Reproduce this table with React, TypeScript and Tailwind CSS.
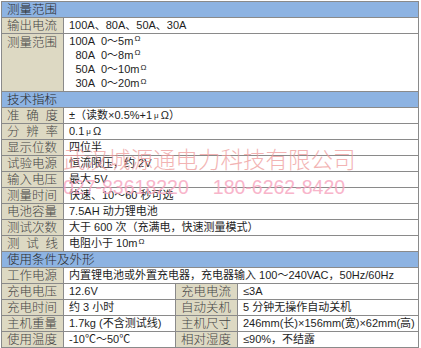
import React from 'react';

const font = { fontFamily: '"Liberation Sans", "Noto Sans CJK SC", sans-serif' };
const cjk = { fontFamily: '"Noto Sans CJK SC", sans-serif' };

const Header: React.FC<{ title: string }> = ({ title }) => (
    <div
        className="h-4 flex items-center bg-[#8db3e2] border-b border-[#8a8a8a] pl-[5px] text-[12.5px] font-light text-[#2a2a2a] leading-none"
        style={cjk}
    >
        {title}
    </div>
);

const Label: React.FC<{ text: string; spread?: boolean; top?: boolean }> = ({ text, spread, top }) => (
    <div
        className={`w-[62px] shrink-0 bg-[#ddd9c3] border-r border-[#8a8a8a] flex pl-[5px] text-[12.5px] font-light text-[#454545] leading-none ${top ? 'items-start pt-[2px]' : 'items-center'}`}
        style={cjk}
    >
        {spread ? (
            <span className="flex justify-between w-[51px]">
                {text.split('').map((c, i) => (
                    <span key={i}>{c}</span>
                ))}
            </span>
        ) : (
            text
        )}
    </div>
);

const Row: React.FC<{ label: string; spread?: boolean; children: React.ReactNode }> = ({ label, spread, children }) => (
    <div className="h-4 flex border-b border-[#8a8a8a]">
        <Label text={label} spread={spread} />
        <div className="flex-1 flex items-center pl-[5px] text-[11px] text-[#1e1e1e] leading-none whitespace-nowrap">{children}</div>
    </div>
);

const Row4: React.FC<{ l1: string; v1: React.ReactNode; l2: string; v2: React.ReactNode }> = ({ l1, v1, l2, v2 }) => (
    <div className="h-4 flex border-b border-[#8a8a8a]">
        <Label text={l1} />
        <div className="w-[112px] shrink-0 border-r border-[#8a8a8a] flex items-center pl-[5px] text-[11px] text-[#1e1e1e] leading-none whitespace-nowrap">{v1}</div>
        <Label text={l2} />
        <div className="flex-1 flex items-center pl-[5px] text-[11px] text-[#1e1e1e] leading-none whitespace-nowrap">{v2}</div>
    </div>
);

const Ohm = () => <span className="text-[8px] relative -top-[2px] ml-px">Ω</span>;
const Mu = () => <span className="text-[8px] mx-[2px]">μ</span>;

const ranges = [
    ['100A', '0～5m'],
    ['80A', '0～8m'],
    ['50A', '0～10m'],
    ['30A', '0～20m'],
];

const App: React.FC = () => {
    return (
        <div className="bg-white w-[421px] h-[348px] overflow-hidden pt-px pl-px relative" style={font}>
            <div className="w-[418px] border-t border-l border-r border-[#8a8a8a]">
                {/* 测量范围 */}
                <Header title="测量范围" />
                <Row label="输出电流">100A、80A、50A、30A</Row>
                <div className="h-[58px] flex border-b border-[#8a8a8a]">
                    <Label text="测量范围" top />
                    <div className="flex-1 flex flex-col pl-[5px] text-[11px] text-[#1e1e1e] leading-none">
                        {ranges.map(([a, r]) => (
                            <div key={a} className="h-[14.5px] flex items-center">
                                <span className="w-[26px] text-right">{a}</span>
                                <span className="ml-[6px]">{r}</span>
                                <Ohm />
                            </div>
                        ))}
                    </div>
                </div>

                {/* 技术指标 */}
                <Header title="技术指标" />
                <Row label="准确度" spread>
                    ±（读数×0.5%+1<Mu />Ω）
                </Row>
                <Row label="分辨率" spread>
                    0.1<Mu />Ω
                </Row>
                <Row label="显示位数">四位半</Row>
                <Row label="试验电源">恒流限压，约 2V</Row>
                <Row label="输入电压">最大 5V</Row>
                <Row label="测量时间">快速、10～60 秒可选</Row>
                <Row label="电池容量">7.5AH 动力锂电池</Row>
                <Row label="测试次数">大于 600 次（充满电，快速测量模式）</Row>
                <Row label="测试线" spread>
                    电阻小于 10m<Ohm />
                </Row>

                {/* 使用条件及外形 */}
                <Header title="使用条件及外形" />
                <Row label="工作电源">内置锂电池或外置充电器，充电器输入 100～240VAC，50Hz/60Hz</Row>
                <Row4 l1="充电电压" v1="12.6V" l2="充电电流" v2="≤3A" />
                <Row4 l1="充电时间" v1="约 3 小时" l2="自动关机" v2="5 分钟无操作自动关机" />
                <Row4 l1="主机重量" v1="1.7kg (不含测试线)" l2="主机尺寸" v2="246mm(长)×156mm(宽)×62mm(高)" />
                <Row4 l1="使用温度" v1="-10℃～50℃" l2="相对湿度" v2="≤90%，不结露" />
            </div>

            {/* watermark */}
            <div className="absolute left-[63px] top-[147px] pointer-events-none select-none">
                <div className="text-[22.5px] leading-none font-light text-[#ee9a9a] opacity-75 whitespace-nowrap" style={cjk}>
                    武汉城源通电力科技有限公司
                </div>
                <div className="mt-[8px] flex text-[19.5px] leading-none text-[#f7a3be] opacity-80 whitespace-nowrap">
                    <span>027-83618220</span>
                    <span className="ml-[24px]">180-6262-8420</span>
                </div>
            </div>
        </div>
    );
};

export default App;
